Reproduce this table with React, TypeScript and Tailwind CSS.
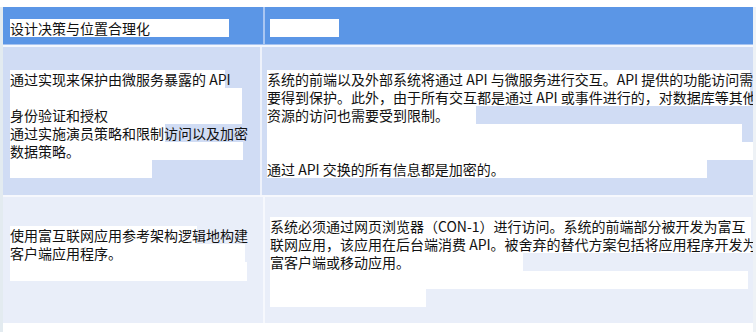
import React from 'react';

// a highlighted run of text: white block, fixed width, one or more 18px lines
const Hl: React.FC<{ w: string; children?: React.ReactNode; className?: string }> = ({ w, children, className }) => (
    <div className={`${w} bg-white whitespace-nowrap ${className ?? ''}`}>{children}</div>
);

export default function App() {
    return (
        <div className="w-[756px] h-[332px] bg-white flex text-[14px] leading-[18px] text-[#111] font-['Noto_Sans_CJK_SC',sans-serif]">
            <div className="w-[3px] mt-[7px] bg-[#e3ebf0]" />
            <div className="w-[750px] pt-[7px] flex flex-col">
                {/* header */}
                <div className="flex h-[37px] bg-[#5b96e6]">
                    <div className="w-[260px] pl-[7px] pt-[12px]">
                        <Hl w="w-[219px]">设计决策与位置合理化</Hl>
                    </div>
                    <div className="w-[2px] bg-[#a9c6f2]" />
                    <div className="flex-1 pl-[5px] pt-[12px]">
                        <Hl w="w-[69px]" className="h-[18px]" />
                    </div>
                </div>
                <div className="h-[1px] bg-[#a6c3f0]" />
                <div className="h-[2px] bg-[#f4f7fd]" />

                {/* row 1 */}
                <div className="flex h-[148px] bg-[#d0dcf4]">
                    <div className="w-[260px] pl-[7px] pt-[23px]">
                        <Hl w="w-[215px]">通过实现来保护由微服务暴露的 API</Hl>
                        <Hl w="w-[232px]" className="h-[36px] pt-[18px]">身份验证和授权</Hl>
                        <div className="w-[240px] whitespace-nowrap bg-[linear-gradient(to_right,white_155px,transparent_155px)]">
                            通过实施演员策略和限制访问以及加密
                        </div>
                        <Hl w="w-[233px]">数据策略。</Hl>
                        <Hl w="w-[142px]" className="h-[18px]" />
                    </div>
                    <div className="w-[2px] bg-[#eef2fb]" />
                    <div className="flex-1 pl-[5px] pt-[23px]">
                        <Hl w="w-[483px]">
                            系统的前端以及外部系统将通过 API 与微服务进行交互。API 提供的功能访问需
                            <br />
                            要得到保护。此外，由于所有交互都是通过 API 或事件进行的，对数据库等其他
                        </Hl>
                        <Hl w="w-[209px]">资源的访问也需要受到限制。</Hl>
                        <Hl w="w-[475px]" className="h-[18px]" />
                        <Hl w="w-[486px]" className="h-[18px] relative" />
                        <Hl w="w-[440px]">通过 API 交换的所有信息都是加密的。</Hl>
                    </div>
                </div>
                <div className="h-[2px] bg-[#f6f8fd]" />

                {/* row 2 */}
                <div className="flex h-[126px] bg-[#e9eef9]">
                    <div className="w-[260px] pl-[7px] pt-[29px]">
                        <div className="w-[240px] whitespace-nowrap bg-[linear-gradient(to_right,white_187px,transparent_187px)]">
                            使用富互联网应用参考架构逻辑地构建
                        </div>
                        <Hl w="w-[235px]">客户端应用程序。</Hl>
                        <Hl w="w-[237px]" className="h-[19px]" />
                    </div>
                    <div className="w-[2px] bg-[#f6f8fd]" />
                    <div className="flex-1 pl-[5px] pt-[20px]">
                        <Hl w="w-[481px]">
                            系统必须通过网页浏览器（CON-1）进行访问。系统的前端部分被开发为富互
                            <br />
                            联网应用，该应用在后台端消费 API。被舍弃的替代方案包括将应用程序开发为
                        </Hl>
                        <Hl w="w-[253px]">富客户端或移动应用。</Hl>
                        <Hl w="w-[478px]" className="h-[18px]" />
                        <Hl w="w-[156px]" className="h-[18px]" />
                    </div>
                </div>
            </div>
            <div className="w-[3px] mt-[7px] bg-[#eef2f6]" />
        </div>
    );
}
